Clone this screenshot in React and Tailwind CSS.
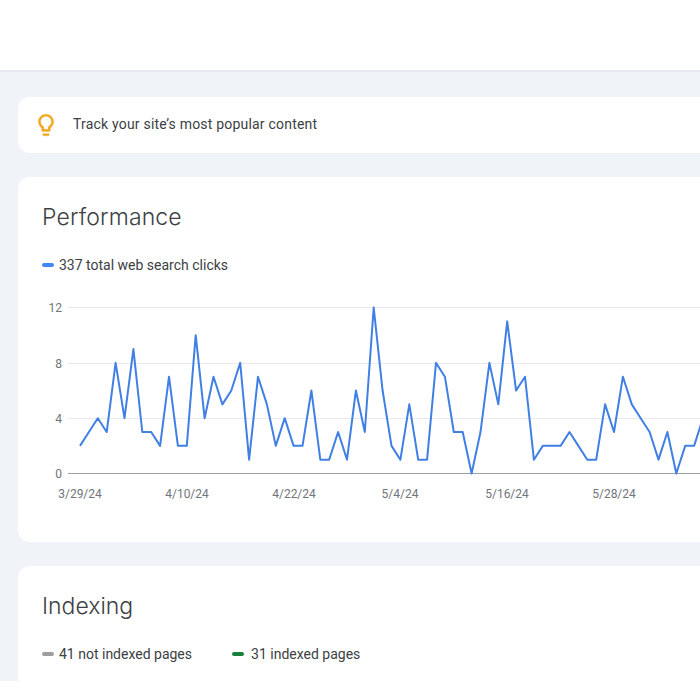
import React from 'react';

const clicks = [2,3,4,3,8,4,9,3,3,2,7,2,2,10,4,7,5,6,8,1,7,5,2,4,2,2,6,1,1,3,1,6,3,12,6,2,1,5,1,1,8,7,3,3,0,3,8,5,11,6,7,1,2,2,2,3,2,1,1,5,3,7,5,4,3,1,3,0,2,2,4];
const xLabels = [['3/29/24', 38], ['4/10/24', 145], ['4/22/24', 252], ['5/4/24', 358], ['5/16/24', 465], ['5/28/24', 572]];
const yTicks = [[12, 27.5], [8, 83.5], [4, 138.5]];

const xOf = (i) => 38 + i * 8.9;
const yOf = (v) => 193.5 - v * 13.83;

const Legend = ({ color, label, wide }) => (
  <div className={`flex items-center ${wide ? 'gap-[7px]' : 'gap-[5px]'}`}>
    <span className={`w-[12px] h-[4px] rounded-full ${color}`} />
    <span className="text-sm leading-5 text-[#3c4043]">{label}</span>
  </div>
);

const ClicksChart = () => (
  <svg width="660" height="230" className="block mt-[5px]" fontFamily="Roboto, sans-serif">
    {yTicks.map(([t, y]) => (
      <g key={t}>
        <line x1="26" x2="660" y1={y} y2={y} stroke="#e8eaed" />
        <text x="20" y={y + 4} textAnchor="end" fontSize="12" fill="#70757a">{t}</text>
      </g>
    ))}
    <line x1="26" x2="660" y1="193.5" y2="193.5" stroke="#9aa0a6" />
    <text x="20" y="197.5" textAnchor="end" fontSize="12" fill="#70757a">0</text>
    <polyline
      points={clicks.map((v, i) => `${xOf(i)},${yOf(v)}`).join(' ')}
      fill="none"
      stroke="#4080e4"
      strokeWidth="2"
      strokeLinejoin="round"
    />
    {xLabels.map(([label, x]) => (
      <text key={label} x={x} y="218" textAnchor="middle" fontSize="12" fill="#70757a">{label}</text>
    ))}
  </svg>
);

const App = () => {
  return (
    <div className="w-[700px] h-[700px] overflow-hidden bg-white font-['Roboto',sans-serif]">
      <div className="h-[681px] overflow-hidden bg-[#f0f4f9]">
        <div className="h-[72px] bg-white border-b-2 border-[#e6e9ee]" />

        <div className="w-[900px] pl-[18px] pt-[25px] flex flex-col gap-[24px]">
          <div className="h-[56px] rounded-xl bg-white flex items-center pl-[15px] gap-[14px]">
            <svg width="26" height="26" viewBox="0 0 24 24" fill="#f2a71b" stroke="#f2a71b" strokeWidth="0.3">
              <path d="M9 21c0 .55.45 1 1 1h4c.55 0 1-.45 1-1v-1H9v1zm3-19C8.14 2 5 5.14 5 9c0 2.38 1.19 4.47 3 5.74V17c0 .55.45 1 1 1h6c.55 0 1-.45 1-1v-2.26c1.81-1.27 3-3.36 3-5.74 0-3.86-3.14-7-7-7zm2.85 11.1l-.85.6V16h-4v-2.3l-.85-.6C7.8 12.16 7 10.63 7 9c0-2.76 2.24-5 5-5s5 2.24 5 5c0 1.63-.8 3.16-2.15 4.1z" />
            </svg>
            <span className="mb-[2px] text-sm tracking-[0.2px] text-[#3c4043]">Track your site’s most popular content</span>
          </div>

          <div className="h-[365px] rounded-xl bg-white pl-[24px] pt-[24px]">
            <h2 className="text-[23px] tracking-[0.15px] leading-[32px] font-light text-[#3c4043] font-['Inter',sans-serif]">Performance</h2>
            <div className="mt-[22px]">
              <Legend color="bg-[#4285f4]" label="337 total web search clicks" />
            </div>
            <ClicksChart />
          </div>

          <div className="h-[200px] rounded-xl bg-white pl-[24px] pt-[24px]">
            <h2 className="text-[23px] leading-[32px] font-light text-[#3c4043] font-['Inter',sans-serif]">Indexing</h2>
            <div className="mt-[22px] flex gap-[40px]">
              <Legend color="bg-[#9e9e9e]" label="41 not indexed pages" />
              <Legend color="bg-[#188038]" label="31 indexed pages" wide />
            </div>
          </div>
        </div>
      </div>
    </div>
  );
};

export default App;
